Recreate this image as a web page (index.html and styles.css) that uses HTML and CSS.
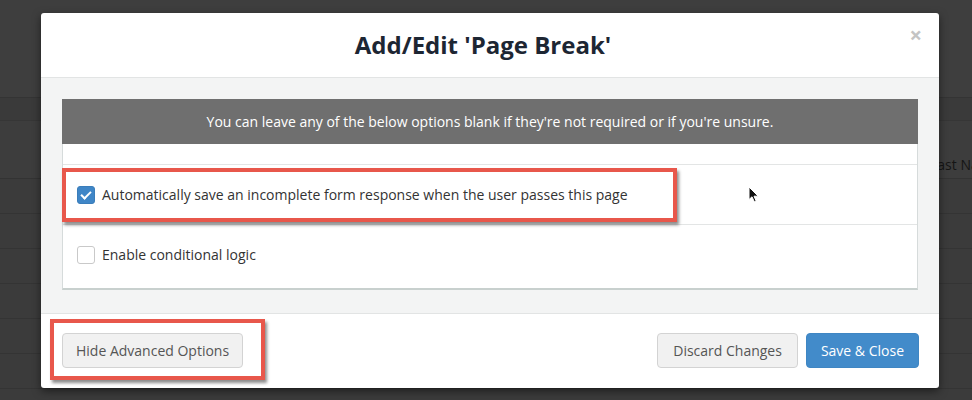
FILE: index.html
```html
<!DOCTYPE html>
<html lang="en">
<head>
    <meta charset="UTF-8">
    <meta name="viewport" content="width=device-width, initial-scale=1.0">
    <title>Add/Edit 'Page Break'</title>
    <link rel="stylesheet" href="styles.css">
</head>
<body>
    <!-- dimmed page behind the modal -->
    <div class="page">
        <div class="page-top"></div>
        <div class="page-sub"></div>
        <div class="page-head"><span>Last Name</span></div>
        <div class="page-row"></div>
        <div class="page-row"></div>
        <div class="page-row"></div>
        <div class="page-row"></div>
        <div class="page-row"></div>
        <div class="page-row"></div>
    </div>

    <div class="modal">
        <div class="modal-header">
            <h2>Add/Edit 'Page Break'</h2>
            <span class="close">&times;</span>
        </div>
        <div class="modal-body">
            <div class="panel">
                <div class="panel-note">You can leave any of the below options blank if they're not required or if you're unsure.</div>
                <div class="panel-gap"></div>
                <label class="option">
                    <input type="checkbox" checked>
                    <span class="check"></span>
                    <span>Automatically save an incomplete form response when the user passes this page</span>
                </label>
                <label class="option last">
                    <input type="checkbox">
                    <span class="check"></span>
                    <span>Enable conditional logic</span>
                </label>
            </div>
        </div>
        <div class="modal-footer">
            <button class="btn">Hide Advanced Options</button>
            <div class="footer-right">
                <button class="btn">Discard Changes</button>
                <button class="btn primary">Save &amp; Close</button>
            </div>
        </div>

        <!-- annotation boxes -->
        <div class="mark mark-option"></div>
        <div class="mark mark-button"></div>

        <svg class="cursor" width="12" height="17" viewBox="0 0 12 17">
            <path d="M1 1 L1 13.5 L4 10.8 L6.3 15.8 L8.2 15 L6 10.2 L10.2 10.2 Z" fill="#111" stroke="#fff" stroke-width="1"/>
        </svg>
    </div>
</body>
</html>
```

FILE: styles.css
```css
body {
    margin: 0;
    background: #3b3b3b;
    font-family: "Open Sans", Arial, sans-serif;
    color: #333;
    overflow: hidden;
}

/* ページ背景 */
.page {
    display: flex;
    flex-direction: column;
}
.page-top {
    height: 97px;
    background: #3e3e3e;
    border-bottom: 1px solid #343434;
}
.page-sub {
    height: 22px;
    background: #3a3a3a;
    border-bottom: 1px solid #363636;
}
.page-head {
    height: 53px;
    background: #3d3d3d;
    border-bottom: 1px solid #333;
    padding: 0 0 4px 930px;
    display: flex;
    align-items: flex-end;
    white-space: nowrap;
    overflow: hidden;
    font-size: 14px;
    color: #151515;
}
.page-row {
    height: 34px;
    background: #3b3b3b;
    border-bottom: 1px solid #343434;
}

/* modal */
.modal {
    position: absolute;
    left: 41px;
    top: 13px;
    width: 898px;
    height: 375px;
    background: #fff;
    border-radius: 3px;
    box-shadow: 0 3px 9px rgba(0, 0, 0, .5);
    display: flex;
    flex-direction: column;
}
.modal-header {
    height: 64px;
    border-bottom: 1px solid #e2e4e4;
    display: flex;
    align-items: center;
    justify-content: center;
    position: relative;
}
.modal-header h2 {
    margin: 0 14px 2px 0;
    font-size: 24px;
    font-weight: 700;
    color: #1d2633;
}
.close {
    position: absolute;
    right: 17px;
    top: 6px;
    font-size: 22px;
    color: #c4c4c4;
    font-weight: 700;
}
.modal-body {
    background: #f3f4f4;
    padding: 21px 21px 21px;
    flex: 1;
}
.panel {
    background: #fff;
    border: 1px solid #d6dbdb;
    border-bottom: 2px solid #c8d0ce;
}
.panel-note {
    height: 45px;
    background: #6f6f6f;
    color: #fff;
    font-size: 14px;
    display: flex;
    align-items: center;
    justify-content: center;
    margin: -1px -1px 0;
}
.panel-gap {
    height: 20px;
    border-bottom: 1px solid #e3e5e5;
}
.option {
    height: 59px;
    display: flex;
    align-items: center;
    gap: 7px;
    padding-left: 14px;
    font-size: 14px;
    color: #333;
    border-bottom: 1px solid #e3e5e5;
}
.option.last {
    height: 63px;
    padding-bottom: 4px;
    box-sizing: border-box;
    border-bottom: none;
}
.option input {
    display: none;
}
.check {
    width: 16px;
    height: 16px;
    border: 1px solid #c9c9c9;
    border-radius: 3px;
    background: #fff;
    position: relative;
}
.option input:checked + .check {
    background: #3f86c7;
    border-color: #3a7dba;
}
.option input:checked + .check:before {
    content: "";
    position: absolute;
    left: 5px;
    top: 2px;
    width: 4px;
    height: 8px;
    border: solid #fff;
    border-width: 0 2px 2px 0;
    transform: rotate(45deg);
}
.modal-footer {
    height: 75px;
    border-top: 1px solid #e2e4e4;
    display: flex;
    align-items: flex-start;
    justify-content: space-between;
    padding: 19px 20px 0 21px;
    box-sizing: border-box;
}
.footer-right {
    display: flex;
    gap: 8px;
}
.btn {
    height: 35px;
    padding: 0 13px;
    font-family: "Open Sans", Arial, sans-serif;
    font-size: 14px;
    color: #555;
    background: #f1f1f1;
    border: 1px solid #d3d3d3;
    border-radius: 4px;
}
.footer-right .btn {
    padding: 0 15px;
}
.footer-right .btn.primary {
    background: #428bca;
    border-color: #3f86c3;
    color: #fff;
    padding: 0 14px;
}

/* 赤い枠 */
.mark {
    position: absolute;
    border: 4px solid #e8574b;
    box-shadow: 2px 3px 3px rgba(0, 0, 0, .45);
    box-sizing: border-box;
}
.mark-option {
    left: 21px;
    top: 155px;
    width: 615px;
    height: 54px;
}
.mark-button {
    left: 9px;
    top: 306px;
    width: 215px;
    height: 61px;
}
.cursor {
    position: absolute;
    left: 707px;
    top: 173px;
}
```
